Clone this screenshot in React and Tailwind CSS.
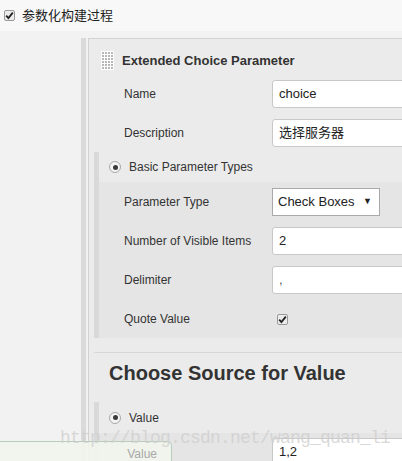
const font = { fontFamily: '"Liberation Sans", Arial, "Noto Sans CJK SC", sans-serif' }

function Check() {
  return (
    <span className="inline-flex h-[11px] w-[11px] items-center justify-center rounded-[2px] border border-[#9a9a9a] bg-[#ececec]">
      <svg width="9" height="9" viewBox="0 0 9 9">
        <path d="M1.2 4.6 L3.4 7 L7.8 1.6" fill="none" stroke="#222" strokeWidth="1.8" />
      </svg>
    </span>
  )
}

function Radio() {
  return (
    <span className="inline-flex h-[12px] w-[12px] items-center justify-center rounded-full border border-[#a8a8a8] bg-[#f4f4f4]">
      <span className="h-[5px] w-[5px] rounded-full bg-[#3a3a3a]" />
    </span>
  )
}

function Handle() {
  const dots = []
  for (let r = 0; r < 6; r++)
    for (let c = 0; c < 4; c++)
      dots.push(<rect key={r + '-' + c} x={1 + c * 3} y={1 + r * 3} width="2" height="2" fill="#b8b8b8" />)
  return (
    <svg width="13" height="19" viewBox="0 0 13 19" className="bg-white">
      {dots}
    </svg>
  )
}

function TextBox({ value, cn = '' }) {
  return (
    <div className={`flex h-[28px] w-[160px] items-center rounded-[3px] border border-[#c8c8c8] bg-white pl-[6px] text-[13px] text-[#222] ${cn}`}>
      {value}
    </div>
  )
}

function Row({ label, children, inner }) {
  return (
    <div className="flex h-[39px] items-center">
      <div className={`${inner ? 'w-[173px] pl-[25px]' : 'w-[183px] pl-[35px]'} text-[12px] text-[#333]`}>{label}</div>
      {children}
    </div>
  )
}

export default function App() {
  return (
    <div style={font} className="relative h-[461px] w-[402px] overflow-hidden bg-[#f2f2f2]">
      {/* top bar */}
      <div className="flex h-[31px] items-center gap-[7px] bg-[#f8f8f8] pl-[4px] text-[13px] text-[#222]">
        <Check />
        <span>参数化构建过程</span>
      </div>

      <div className="mt-[7px] flex">
        <div className="w-[81px] shrink-0" />
        <div className="w-[5px] shrink-0 bg-[#dadada]" />
        <div className="w-[2px] shrink-0" />
        <div className="flex-1 border-l border-t border-[#d2d2d2] bg-[#ebebeb]">
          {/* header */}
          <div className="flex h-[35px] items-center gap-[8px] pl-[12px] pt-[8px]">
            <Handle />
            <span className="text-[13px] font-bold text-[#333]">Extended Choice Parameter</span>
          </div>
          <Row label="Name"><TextBox value="choice" /></Row>
          <Row label="Description"><TextBox value="选择服务器" /></Row>

          {/* Basic Parameter Types */}
          <div className="ml-[5px] flex">
            <div className="w-[5px] shrink-0 bg-[#d9d9d9]" />
            <div className="flex-1">
              <div className="flex h-[30px] items-center gap-[8px] pl-[10px] text-[12px] text-[#333]">
                <Radio />
                <span>Basic Parameter Types</span>
              </div>
              <div className="bg-[#e5e5e5]">
                <Row inner label="Parameter Type">
                  <div className="flex h-[28px] w-[108px] items-center justify-between border border-[#a9a9a9] bg-white pl-[5px] pr-[7px] text-[13px] text-[#222]">
                    <span>Check Boxes</span>
                    <span className="text-[9px]">▼</span>
                  </div>
                </Row>
                <Row inner label="Number of Visible Items"><TextBox value="2" cn="h-[27px]" /></Row>
                <Row inner label="Delimiter"><TextBox value="," cn="h-[27px] text-[#555]" /></Row>
                <Row inner label="Quote Value">
                  <span className="pl-[5px]"><Check /></span>
                </Row>
              </div>
            </div>
          </div>

          <div className="ml-[5px] mt-[14px] border-t border-[#d6d6d6]" />
          <div className="flex h-[40px] items-center pl-[20px] text-[20px] font-bold text-[#333]">
            Choose Source for Value
          </div>

          {/* Value */}
          <div className="ml-[5px] mt-[9px] flex">
            <div className="w-[5px] shrink-0 bg-[#d9d9d9]" />
            <div className="flex-1">
              <div className="flex h-[31px] items-center gap-[8px] pl-[10px] text-[12px] text-[#333]">
                <Radio />
                <span>Value</span>
              </div>
              <div className="bg-[#e5e5e5]">
                <div className="flex h-[39px] items-start pt-[5px]">
                  <div className="w-[173px]" />
                  <div className="flex h-[28px] w-[160px] items-center rounded-[3px] border border-[#c8c8c8] bg-white pl-[6px] text-[13px] text-[#222]">1,2</div>
                </div>
              </div>
            </div>
          </div>
        </div>
      </div>

      {/* drag ghost */}
      <div className="absolute left-0 top-[441px] flex h-[24px] w-[172px] justify-end rounded-tr-[5px] border-r border-t border-[#b5ceba] bg-[#f1f5ec]/90 pr-[14px] pt-[3px] text-[12px] text-[#a8a8a8]">
        Value
      </div>

      {/* watermark */}
      <div
        style={{ fontFamily: '"Liberation Mono", "DejaVu Sans Mono", monospace' }}
        className="pointer-events-none absolute left-[60px] top-[429px] text-[18px] leading-none tracking-[-0.8px] text-[#cfcfcf]/80"
      >
        http://blog.csdn.net/wang_quan_li
      </div>
    </div>
  )
}
